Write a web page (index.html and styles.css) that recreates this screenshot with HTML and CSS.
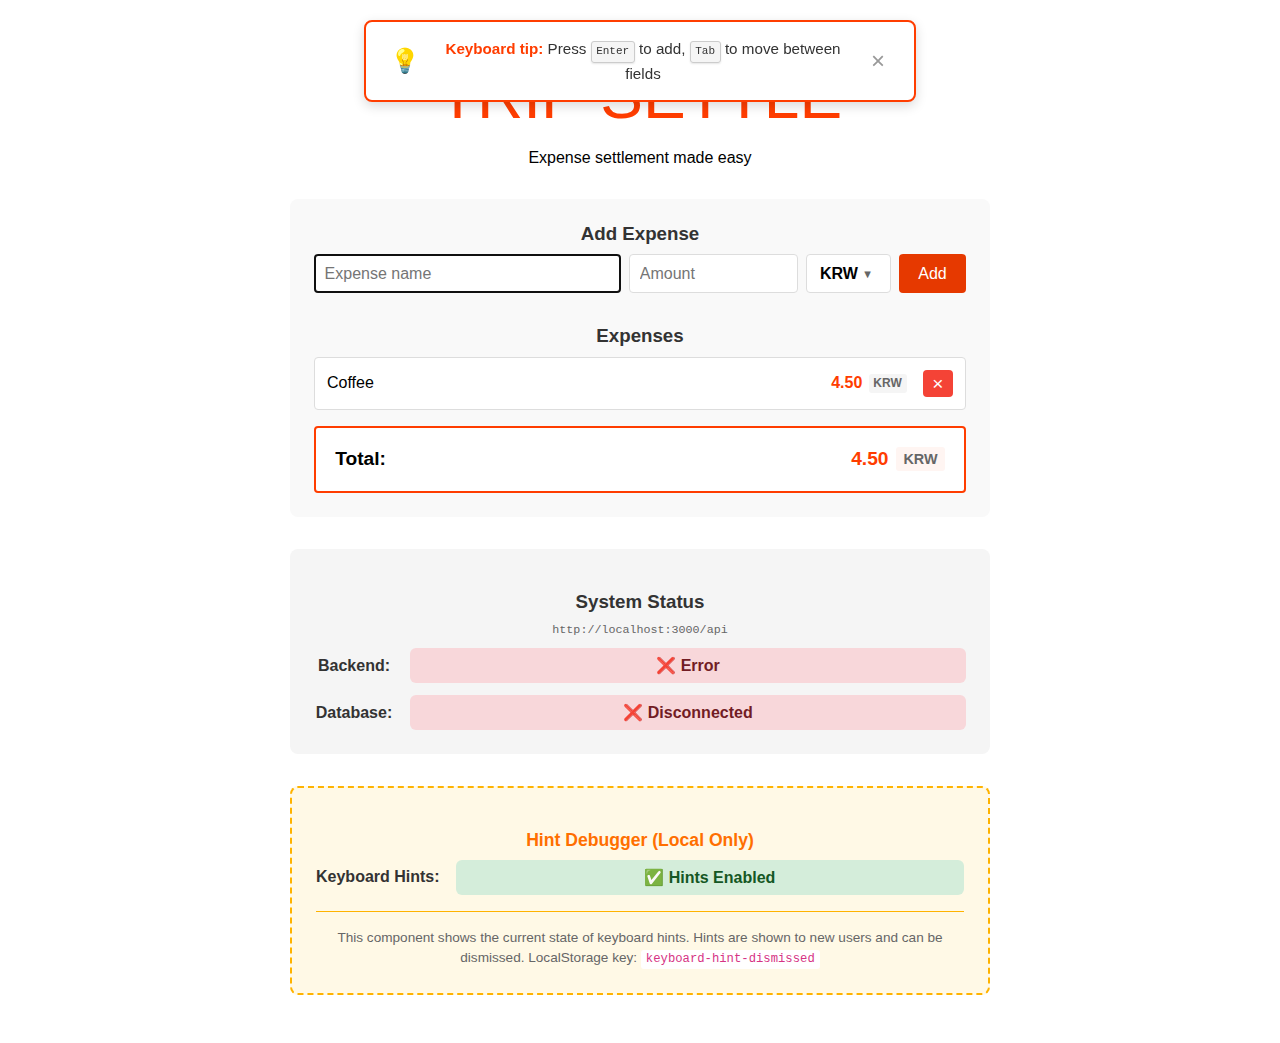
FILE: index.html
```html
<!DOCTYPE html>
<html lang="en">
<head>
<meta charset="utf-8">
<title>Trip Settle</title>
<link rel="stylesheet" href="styles.css">
</head>
<body>
<div class="hint" role="status">
  <span class="hint-icon">💡</span>
  <p class="hint-text"><strong>Keyboard tip:</strong> Press <kbd>Enter</kbd> to add, <kbd>Tab</kbd> to move between fields</p>
  <button class="hint-close" aria-label="Dismiss">×</button>
</div>
<main class="app">
  <h1 class="title">TRIP SETTLE</h1>
  <p class="subtitle">Expense settlement made easy</p>

  <section class="card expenses">
    <h3>Add Expense</h3>
    <form class="form">
      <input class="field name focused" type="text" placeholder="Expense name">
      <input class="field amount" type="text" placeholder="Amount">
      <button class="currency" type="button">KRW <span class="arrow">▼</span></button>
      <button class="add" type="button">Add</button>
    </form>
    <h3 class="list-title">Expenses</h3>
    <div class="item">
      <span class="item-name">Coffee</span>
      <span class="item-amount">4.50</span>
      <span class="tag">KRW</span>
      <button class="remove" aria-label="Remove">×</button>
    </div>
    <div class="total">
      <span class="total-label">Total:</span>
      <span class="total-amount">4.50</span>
      <span class="total-tag">KRW</span>
    </div>
  </section>

  <section class="card status">
    <h3>System Status</h3>
    <p class="url">http://localhost:3000/api</p>
    <div class="row"><span class="label">Backend:</span><span class="badge error">❌ Error</span></div>
    <div class="row"><span class="label">Database:</span><span class="badge error">❌ Disconnected</span></div>
  </section>

  <section class="card debugger">
    <h3>Hint Debugger (Local Only)</h3>
    <div class="row"><span class="label">Keyboard Hints:</span><span class="badge ok">✅ Hints Enabled</span></div>
    <p class="note">This component shows the current state of keyboard hints. Hints are shown to new users and can be dismissed. LocalStorage key: <code>keyboard-hint-dismissed</code></p>
  </section>
</main>
</body>
</html>
```
FILE: styles.css
```css
* { box-sizing: border-box; }
body {
  margin: 0;
  background: #fff;
  color: #000;
  font: 16px/24px "Liberation Sans", Arial, sans-serif;
  text-align: center;
}
h1, h3, p { margin: 0; }
button, input { font: inherit; margin: 0; }
button { padding: 0; border: 0; }

.hint {
  position: fixed;
  z-index: 10;
  top: 20px;
  left: 364px;
  width: 552px;
  height: 82px;
  padding: 0 24px;
  display: flex;
  align-items: center;
  gap: 16px;
  background: #fff;
  border: 2px solid #ff3d00;
  border-radius: 8px;
  box-shadow: 0 4px 12px rgba(0, 0, 0, .15);
}
.hint-icon { width: 30px; font-size: 24px; }
.hint-text { flex: 1; font-size: 15.2px; line-height: 25px; color: #333; }
.hint-text strong { color: #ff3d00; }
kbd {
  padding: 3px 4.6px 5px;
  font: 11px "Liberation Mono", monospace;
  background: #f5f5f5;
  border: 1px solid #ccc;
  border-radius: 3px;
  box-shadow: 0 1px 2px rgba(0, 0, 0, .1);
}
.hint-close { width: 24px; height: 24px; background: none; color: #999; font-size: 24px; line-height: 24px; }

.app { width: 700px; margin: 0 auto; padding-top: 61px; }
.title { font-size: 64px; font-weight: 400; line-height: 70px; color: #ff3d00; }
.subtitle { margin-top: 15px; margin-bottom: 29px; }

.card { padding: 24px; border-radius: 8px; margin-bottom: 32px; }
h3 { font-size: 18.72px; line-height: 22px; color: #333; }

.expenses { height: 318px; background: #f9f9f9; }
.form { display: flex; gap: 8px; height: 39px; margin-top: 9px; }
.field { min-width: 0; padding: 0 9.8px; background: #fff; border: 1px solid #ddd; border-radius: 4px; outline: 0; }
.field::placeholder { color: #757575; opacity: 1; }
.name { width: 307px; }
.focused { padding: 0 8.6px; border: 2px solid #101010; }
.amount { width: 169px; }
.currency {
  width: 85px;
  display: flex;
  align-items: center;
  justify-content: center;
  gap: 4px;
  padding-right: 4px;
  font-weight: 700;
  color: #000;
  background: #fff;
  border: 1px solid #ddd;
  border-radius: 4px;
}
.arrow { font-size: 11.2px; color: #666; }
.add { width: 67px; color: #fff; background: #e63900; border-radius: 4px; }
.list-title { margin-top: 32px; }
.item {
  display: flex;
  align-items: center;
  height: 53px;
  margin-top: 10px;
  padding: 0 12px;
  background: #fff;
  border: 1px solid #ddd;
  border-radius: 4px;
}
.item-name, .total-label { flex: 1; text-align: left; }
.item-name, .item-amount { padding-bottom: 2px; }
.item-amount { font-weight: 700; color: #ff3d00; margin-right: 6.7px; }
.tag { width: 38px; padding-right: 1px; font-size: 12px; line-height: 19px; font-weight: 700; color: #666; background: #f5f5f5; border-radius: 3px; }
.remove { width: 30px; height: 27px; margin-left: 16px; padding-right: 0.5px; font-size: 19.2px; line-height: 27px; color: #fff; background: #f44336; border-radius: 4px; }
.total {
  display: flex;
  align-items: center;
  height: 67px;
  margin-top: 16px;
  padding: 0 19px 2px 19.2px;
  font-size: 19.2px;
  font-weight: 700;
  background: #fff;
  border: 2px solid #ff3d00;
  border-radius: 4px;
}
.total-amount { color: #ff3d00; margin-right: 7.5px; }
.total-tag { width: 49px; font-size: 14.4px; line-height: 24px; color: #666; background: #fff5f2; border-radius: 3px; }

.status { height: 205px; padding-top: 42px; background: #f5f5f5; }
.url { margin-top: 8px; font: 11.7px/18px "Liberation Mono", monospace; color: #666; }
.row { display: flex; align-items: center; gap: 16px; }
.label { font-weight: 700; color: #333; }
.badge { flex: 1; height: 35px; line-height: 35px; font-weight: 700; border-radius: 6px; }
.error { color: #721c24; background: #f8d7da; }
.ok { color: #155724; background: #d4edda; }
.status .row { margin-top: 9px; }
.status .row + .row { margin-top: 12px; }
.status .label { width: 80px; }

.debugger { height: 209px; padding-top: 41px; margin-bottom: 0; background: #fff9e6; border: 2px dashed #ffb300; }
.debugger h3 { font-size: 17.6px; color: #ff6f00; }
.debugger .row { margin-top: 9px; }
.debugger .label { padding-bottom: 2px; }
.note { margin-top: 16px; padding-top: 16px; border-top: 1px solid #ffb300; font-size: 13.6px; line-height: 20.4px; color: #666; }
code { padding: 2px 5px 3px; font: 12.24px "Liberation Mono", monospace; color: #d63384; background: #fff; border-radius: 3px; }
```
